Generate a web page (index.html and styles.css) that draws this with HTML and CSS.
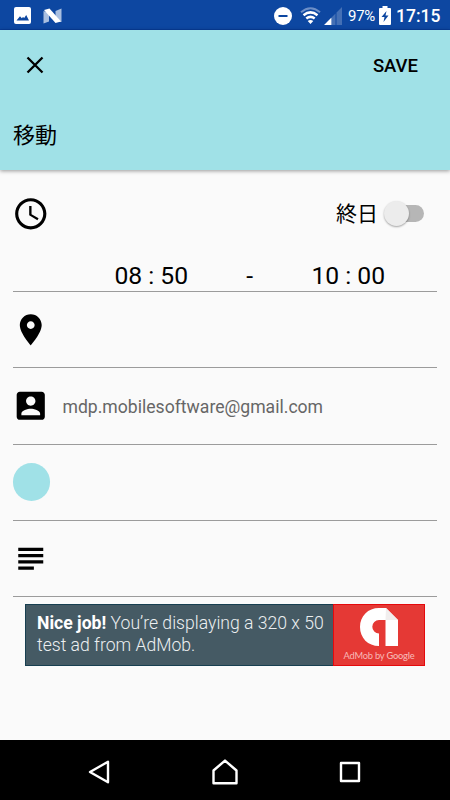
FILE: index.html
```
<!DOCTYPE html>
<html lang="ja">
<head>
<meta charset="utf-8">
<title>移動</title>
<link rel="stylesheet" href="styles.css">
</head>
<body>
<div class="screen">
  <div class="status">
    <svg class="status-photo" width="17" height="17" viewBox="0 0 17 17"><rect width="17" height="17" rx="2" fill="#fff"/><path d="M2.500 13.500 6 9.300l1.800 2 1.200-1.300 1.200 1 2-3 2.800 5.500z" fill="#0d47a1"/></svg>
    <svg class="status-n" width="19" height="16" viewBox="0 0 19 16"><path d="M.5 3 6 5v8.500L.5 15.500zM12.500 3 18.500.5V14l-6-1z" fill="#a9bfe0"/><path d="M1 2 6.500.5 18 13.500 12.500 15z" fill="#fff"/></svg>
    <span class="grow"></span>
    <svg class="dnd" width="18" height="18" viewBox="0 0 18 18"><circle cx="9" cy="9" r="9" fill="#fff"/><path d="M4.500 9h9" stroke="#0d47a1" stroke-width="2"/></svg>
    <svg class="wifi" width="21" height="17" viewBox="0 0 21 17" fill="none" stroke-width="2.500"><path d="M1 5.200Q10.500-2.800 20 5.200" stroke="#6d8fc7" stroke-width="2"/><path d="M3.500 8.200q7-5.600 14 0M6.300 11.500q4.200-3.300 8.400 0" stroke="#fff"/><path d="m7.700 14 2.800 3 2.800-3q-2.800-2-5.600 0z" fill="#fff"/></svg>
    <svg class="cell" width="18" height="18" viewBox="0 0 18 18"><path d="M8 10l3.500-3.500V18H8zM12.500 5.500 18 0v18h-5.500z" fill="#4470b5"/><path d="M0 18l3.500-3.500V18zM3.500 14.500l4-4V18h-4z" fill="#fff"/></svg>
    <span class="percent">97%</span>
    <svg class="battery" width="12" height="19" viewBox="0 0 12 19"><path d="M3.500 0h5v2H11q1 0 1 1v15q0 1-1 1H1q-1 0-1-1V3q0-1 1-1h2.500z" fill="#fff"/><path d="M7.500 5 2.500 11h3L4.500 16l5-6.500h-3z" fill="#0d47a1"/></svg>
    <span class="clock">17:15</span>
  </div>
  <header class="header">
    <div class="toolbar">
      <svg class="close" width="18" height="18" viewBox="0 0 18 18"><path d="m1.500 1.500 15 15M16.500 1.500l-15 15" stroke="#000" stroke-width="2.300"/></svg>
      <span class="save">SAVE</span>
    </div>
    <div class="title">移動</div>
  </header>
  <main class="form">
    <section class="time-block">
      <div class="all-day">
        <svg class="icon" viewBox="0 0 24 24"><path d="M11.990 2C6.470 2 2 6.480 2 12s4.470 10 9.990 10C17.520 22 22 17.520 22 12S17.520 2 11.990 2zM12 20c-4.420 0-8-3.580-8-8s3.580-8 8-8 8 3.580 8 8-3.580 8-8 8zM12.500 7H11v6l5.250 3.150.75-1.230-4.500-2.670z"/></svg>
        <span class="grow"></span>
        <span class="day-label">終日</span>
        <span class="switch"><span class="thumb"></span></span>
      </div>
      <div class="times"><span>08 : 50</span><span>-</span><span>10 : 00</span></div>
    </section>
    <section class="row">
      <svg class="icon" viewBox="0 0 24 24"><path d="M12 2C8.130 2 5 5.130 5 9c0 5.250 7 13 7 13s7-7.750 7-13c0-3.870-3.130-7-7-7zm0 9.500c-1.380 0-2.500-1.120-2.500-2.500s1.120-2.500 2.500-2.500 2.500 1.120 2.500 2.500-1.120 2.500-2.500 2.500z"/></svg>
    </section>
    <section class="row">
      <svg class="icon" viewBox="0 0 24 24"><path d="M3 5v14c0 1.100.89 2 2 2h14c1.100 0 2-.9 2-2V5c0-1.100-.9-2-2-2H5c-1.110 0-2 .9-2 2zm12 4c0 1.660-1.340 3-3 3s-3-1.340-3-3 1.340-3 3-3 3 1.340 3 3zm-9 8c0-2 4-3.100 6-3.100s6 1.100 6 3.100v1H6v-1z"/></svg>
      <span class="email">mdp.mobilesoftware@gmail.com</span>
    </section>
    <section class="row"><span class="color-dot"></span></section>
    <section class="row">
      <svg class="icon" viewBox="0 0 24 24"><path d="M4 5h16v2H4zM4 9h16v2H4zM4 13h16v2H4zM4 17h10v2H4z"/></svg>
    </section>
  </main>
  <aside class="ad">
    <p class="ad-text"><span class="ad-line"><b>Nice job!</b> You’re displaying a 320 x 50</span><span class="ad-line">test ad from AdMob.</span></p>
    <div class="admob">
      <svg width="38" height="38" viewBox="0 0 38 38"><path d="M19 38C8 38 0 30 0 19S8 0 19 0h7l12 12v26H25.500V12H19a6.700 6.700 0 0 0 0 13.400z" fill="#fff"/><path d="M25.500 12H38L26 0z" fill="#f1eeee"/></svg>
      <span class="admob-name">AdMob by <b>Google</b></span>
    </div>
  </aside>
  <nav class="nav">
    <svg width="22" height="24" viewBox="0 0 22 24"><path d="M2 12 20 1.800v20.400z"/></svg>
    <svg width="26" height="26" viewBox="0 0 26 26"><path d="M1.500 11.500 13 1.600l11.500 9.900v12.700h-23z"/></svg>
    <svg width="22" height="22" viewBox="0 0 22 22"><path d="M2 2h18v18H2z"/></svg>
  </nav>
</div>
</body>
</html>
```
FILE: styles.css
```
* { box-sizing: border-box; }
body { margin: 0; font-family: Roboto, "Noto Sans CJK JP", sans-serif; color: #000; }
svg { display: block; flex: none; }
.screen { width: 450px; height: 800px; display: flex; flex-direction: column; background: #fafafa; overflow: hidden; }
.grow { flex: 1; }
.status { height: 30px; flex: none; display: flex; align-items: center; background: #0d47a1; color: #fff; padding: 1px 10px 0 14px; box-shadow: inset 0 -1px #073d9a; }
.status-n { margin-left: 12px; }
.wifi { margin-left: 8px; }
.cell { margin-left: 3px; }
.percent { font-size: 15px; margin-left: 6px; width: 27px; white-space: nowrap; letter-spacing: -.3px; }
.battery { margin-left: 4px; }
.clock { font-size: 17.5px; font-weight: 500; margin-left: 5px; width: 44px; white-space: nowrap; }
.header { height: 140px; flex: none; background: #a0e1e7; box-shadow: 0 1px 4px rgba(0,0,0,.4); }
.toolbar { height: 70px; display: flex; align-items: center; justify-content: space-between; padding: 0 32px 0 26px; }
.save { font-size: 18.5px; font-weight: 500; line-height: 22px; padding-top: 1px; }
.title { font-size: 22px; line-height: 32px; padding: 20px 0 0 13px; }
.form { flex: none; padding: 0 13px 0 12.5px; }
.time-block { height: 122px; border-bottom: 1px solid #9b9b9b; }
.all-day { height: 87px; display: flex; align-items: center; padding-right: 13px; }
.icon { width: 37.5px; height: 37.5px; margin-left: -.2px; }
.day-label { font-size: 21px; line-height: 30px; padding-top: 1px; }
.switch { width: 40px; height: 17px; margin-left: 6px; display: flex; align-items: center; background: linear-gradient(#b6b6b6,#b6b6b6) right center / 30px 17px no-repeat; border-radius: 9px; }
.thumb { width: 25px; height: 25px; flex: none; border-radius: 50%; background: #ececec; box-shadow: 0 1px 2px rgba(0,0,0,.35); }
.times { display: grid; grid-template-columns: 148px 49px 148px; justify-content: center; font-size: 24.7px; line-height: 34px; padding: 2px 0 0 50px; text-align: center; }
.row { height: 76.25px; display: flex; align-items: center; border-bottom: 1px solid #9b9b9b; }
.email { font-size: 17.6px; color: #666; margin-left: 12.7px; padding-top: 2px; }
.color-dot { width: 37.5px; height: 37.5px; border-radius: 50%; background: #a0e1e7; }
.ad { width: 400px; height: 62px; flex: none; margin: 7px 0 0 25px; display: flex; background: #455a64; }
.ad-text { flex: 1; min-width: 0; margin: 0; padding: 8px 0 0 11px; border: 1px solid #173f50; border-right: 0; color: #eceff1; font-size: 17.6px; font-weight: 300; line-height: 21.5px; white-space: nowrap; }
.ad-line { display: block; }
.ad-text b { font-weight: 700; color: #fff; }
.admob { width: 92px; flex: none; background: #e53935; border: 1px solid #e5090c; display: flex; flex-direction: column; align-items: center; padding-top: 3px; }
.admob-name { font-family: Lato, sans-serif; font-size: 9.3px; line-height: 13px; letter-spacing: -.2px; margin-top: 3px; color: #f7b8b6; white-space: nowrap; }
.admob-name b { font-weight: 500; }
.nav { height: 60px; flex: none; margin-top: auto; display: flex; align-items: center; justify-content: space-between; padding: 4px 89px 0 88px; background: #000; fill: none; stroke: #fff; stroke-width: 2.400; stroke-linejoin: round; }
```
